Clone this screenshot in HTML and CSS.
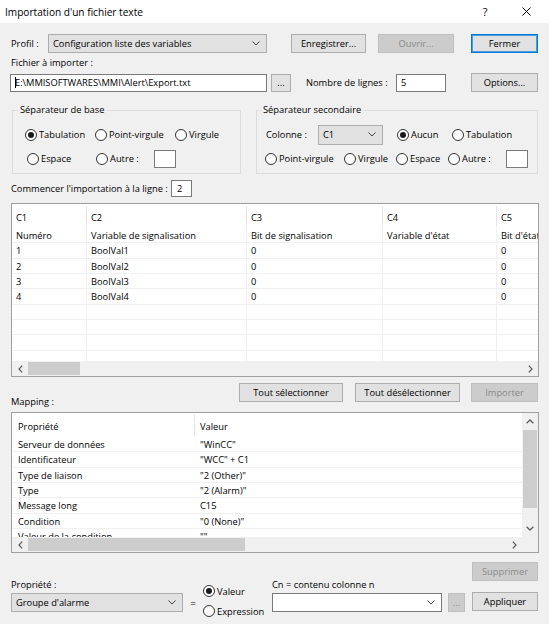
FILE: index.html
```html
<!DOCTYPE html>
<html lang="fr">
<head>
<meta charset="utf-8">
<title>Importation d'un fichier texte</title>
<link rel="stylesheet" href="styles.css">
</head>
<body>
<div class="titlebar">
  <span class="title">Importation d'un fichier texte</span>
  <span class="help">?</span>
  <span class="close"><svg width="9" height="9" viewBox="0 0 9 9"><path d="M0.5 0.5L8.5 8.5M8.5 0.5L0.5 8.5" stroke="#000" stroke-width="1" fill="none"/></svg></span>
</div>
<div class="main">
  <div class="row r1">
    <span class="lbl lbl-profil">Profil :</span>
    <div class="combo combo-profile"><span>Configuration liste des variables</span><svg class="chev" width="8" height="5" viewBox="0 0 8 5"><path d="M0.5 0.5L4 4L7.5 0.5" stroke="#444" stroke-width="1" fill="none"/></svg></div>
    <div class="btn btn-save">Enregistrer...</div>
    <div class="btn btn-open disabled">Ouvrir...</div>
    <div class="btn btn-close default">Fermer</div>
  </div>
  <div class="file-label">Fichier à importer :</div>
  <div class="row r3">
    <div class="input input-file"><span class="caret"></span><span class="path">E:\MMISOFTWARES\MMI\Alert\Export.txt</span></div>
    <div class="btn btn-browse">...</div>
    <span class="lbl lbl-lines">Nombre de lignes :</span>
    <div class="input input-lines">5</div>
    <div class="btn btn-options">Options...</div>
  </div>
  <div class="groups">
    <fieldset class="group group1">
      <legend>Séparateur de base</legend>
      <div class="grow g1r1">
        <label class="radio checked w70"><span class="dot"></span>Tabulation</label>
        <label class="radio w80"><span class="dot"></span>Point-virgule</label>
        <label class="radio"><span class="dot"></span>Virgule</label>
      </div>
      <div class="grow g1r2">
        <label class="radio w69"><span class="dot"></span>Espace</label>
        <label class="radio w58"><span class="dot"></span>Autre :</label>
        <div class="input input-sep"></div>
      </div>
    </fieldset>
    <fieldset class="group group2">
      <legend>Séparateur secondaire</legend>
      <div class="grow g2r1">
        <span class="lbl lbl-col">Colonne :</span>
        <div class="combo combo-col"><span>C1</span><svg class="chev" width="8" height="5" viewBox="0 0 8 5"><path d="M0.5 0.5L4 4L7.5 0.5" stroke="#444" stroke-width="1" fill="none"/></svg></div>
        <label class="radio checked w55 aucun"><span class="dot"></span>Aucun</label>
        <label class="radio"><span class="dot"></span>Tabulation</label>
      </div>
      <div class="grow g2r2">
        <label class="radio w79"><span class="dot"></span>Point-virgule</label>
        <label class="radio w52"><span class="dot"></span>Virgule</label>
        <label class="radio w52"><span class="dot"></span>Espace</label>
        <label class="radio w58"><span class="dot"></span>Autre :</label>
        <div class="input input-sep"></div>
      </div>
    </fieldset>
  </div>
  <div class="row start-row">
    <span class="lbl lbl-start">Commencer l'importation à la ligne :</span>
    <div class="input input-start">2</div>
  </div>

  <div class="dgrid">
    <div class="dcontent">
      <div class="dhead">
        <div class="hc c1">C1</div><div class="hc c2">C2</div><div class="hc c3">C3</div><div class="hc c4">C4</div><div class="hc c5">C5</div>
      </div>
      <div class="drow"><div class="dc c1">Numéro</div><div class="dc c2">Variable de signalisation</div><div class="dc c3">Bit de signalisation</div><div class="dc c4">Variable d'état</div><div class="dc c5">Bit d'état</div></div>
      <div class="drow"><div class="dc c1">1</div><div class="dc c2">BoolVal1</div><div class="dc c3">0</div><div class="dc c4"></div><div class="dc c5">0</div></div>
      <div class="drow"><div class="dc c1">2</div><div class="dc c2">BoolVal2</div><div class="dc c3">0</div><div class="dc c4"></div><div class="dc c5">0</div></div>
      <div class="drow"><div class="dc c1">3</div><div class="dc c2">BoolVal3</div><div class="dc c3">0</div><div class="dc c4"></div><div class="dc c5">0</div></div>
      <div class="drow"><div class="dc c1">4</div><div class="dc c2">BoolVal4</div><div class="dc c3">0</div><div class="dc c4"></div><div class="dc c5">0</div></div>
      <div class="drow"><div class="dc c1"></div><div class="dc c2"></div><div class="dc c3"></div><div class="dc c4"></div><div class="dc c5"></div></div>
      <div class="drow"><div class="dc c1"></div><div class="dc c2"></div><div class="dc c3"></div><div class="dc c4"></div><div class="dc c5"></div></div>
      <div class="drow"><div class="dc c1"></div><div class="dc c2"></div><div class="dc c3"></div><div class="dc c4"></div><div class="dc c5"></div></div>
      <div class="drow"><div class="dc c1"></div><div class="dc c2"></div><div class="dc c3"></div><div class="dc c4"></div><div class="dc c5"></div></div>
    </div>
    <div class="hscroll">
      <span class="sarrow"><svg width="5" height="8" viewBox="0 0 5 8"><path d="M4.2 0.6L1 4L4.2 7.4" stroke="#606060" stroke-width="1.3" fill="none"/></svg></span>
      <span class="hthumb dthumb"></span>
      <span class="sfill"></span>
      <span class="sarrow"><svg width="5" height="8" viewBox="0 0 5 8"><path d="M0.8 0.6L4 4L0.8 7.4" stroke="#606060" stroke-width="1.3" fill="none"/></svg></span>
    </div>
  </div>

  <div class="row actions">
    <span class="lbl lbl-mapping">Mapping :</span>
    <div class="btn btn-selall">Tout sélectionner</div>
    <div class="btn btn-unsel">Tout désélectionner</div>
    <div class="btn btn-import disabled">Importer</div>
  </div>

  <div class="mgrid">
    <div class="mcontent">
      <div class="mhead"><div class="mh m1">Propriété</div><div class="mh m2">Valeur</div></div>
      <div class="mrow"><div class="mc m1">Serveur de données</div><div class="mc m2">"WinCC"</div></div>
      <div class="mrow"><div class="mc m1">Identificateur</div><div class="mc m2">"WCC" + C1</div></div>
      <div class="mrow"><div class="mc m1">Type de liaison</div><div class="mc m2">"2 (Other)"</div></div>
      <div class="mrow"><div class="mc m1">Type</div><div class="mc m2">"2 (Alarm)"</div></div>
      <div class="mrow"><div class="mc m1">Message long</div><div class="mc m2">C15</div></div>
      <div class="mrow"><div class="mc m1">Condition</div><div class="mc m2">"0 (None)"</div></div>
      <div class="mrow"><div class="mc m1">Valeur de la condition</div><div class="mc m2">""</div></div>
    </div>
    <div class="vscroll">
      <span class="varrow"><svg width="8" height="5" viewBox="0 0 8 5"><path d="M0.6 4.2L4 1L7.4 4.2" stroke="#606060" stroke-width="1.3" fill="none"/></svg></span>
      <span class="vthumb"></span>
      <span class="sfill"></span>
      <span class="varrow"><svg width="8" height="5" viewBox="0 0 8 5"><path d="M0.6 0.8L4 4L7.4 0.8" stroke="#606060" stroke-width="1.3" fill="none"/></svg></span>
    </div>
    <div class="hscroll">
      <span class="sarrow"><svg width="5" height="8" viewBox="0 0 5 8"><path d="M4.2 0.6L1 4L4.2 7.4" stroke="#606060" stroke-width="1.3" fill="none"/></svg></span>
      <span class="hthumb mthumb"></span>
      <span class="sfill"></span>
      <span class="sarrow"><svg width="5" height="8" viewBox="0 0 5 8"><path d="M0.8 0.6L4 4L0.8 7.4" stroke="#606060" stroke-width="1.3" fill="none"/></svg></span>
    </div>
    <div class="corner"></div>
  </div>

  <div class="bottom">
    <div class="colA">
      <div class="lbl blabel">Propriété :</div>
      <div class="combo combo-group"><span>Groupe d'alarme</span><svg class="chev" width="8" height="5" viewBox="0 0 8 5"><path d="M0.5 0.5L4 4L7.5 0.5" stroke="#444" stroke-width="1" fill="none"/></svg></div>
    </div>
    <div class="eq">=</div>
    <div class="colR">
      <label class="radio checked small"><span class="dot"></span>Valeur</label>
      <label class="radio small"><span class="dot"></span>Expression</label>
    </div>
    <div class="colC">
      <div class="lbl clabel">Cn = contenu colonne n</div>
      <div class="cline">
        <div class="combo combo-expr"><span></span><svg class="chev" width="8" height="5" viewBox="0 0 8 5"><path d="M0.5 0.5L4 4L7.5 0.5" stroke="#444" stroke-width="1" fill="none"/></svg></div>
        <div class="btn btn-dots disabled">...</div>
      </div>
    </div>
    <div class="colD">
      <div class="btn btn-del disabled">Supprimer</div>
      <div class="btn btn-apply">Appliquer</div>
    </div>
  </div>
</div>
</body>
</html>
```
FILE: styles.css
```css
* { box-sizing: border-box; }
html, body { margin: 0; padding: 0; }
body {
  width: 549px;
  height: 624px;
  overflow: hidden;
  background: #f0f0f0;
  font-family: "Open Sans", "Noto Sans", sans-serif;
  font-size: 9.3px;
  color: #000;
}

/* title bar */
.titlebar {
  height: 23px;
  background: #fff;
  display: flex;
  align-items: center;
  padding-left: 5px;
}
.title { font-size: 10.1px; }
.help { margin-left: auto; width: 12px; text-align: center; font-size: 11px; }
.close { margin-left: 31px; margin-right: 18px; display: flex; }

.main { padding: 0 10px 0 11px; }
.row { display: flex; align-items: center; height: 19px; }
.lbl { white-space: nowrap; }

/* controls */
.combo {
  height: 19px;
  background: #e1e1e1;
  border: 1px solid #adadad;
  display: flex;
  align-items: center;
  justify-content: space-between;
  padding: 0 6px 0 4px;
  white-space: nowrap;
}
.chev { flex: none; }
.btn {
  height: 19px;
  background: #e1e1e1;
  border: 1px solid #adadad;
  display: flex;
  align-items: center;
  justify-content: center;
  white-space: nowrap;
}
.btn.disabled { background: #cccccc; border-color: #bfbfbf; color: #8a8a8a; }
.btn.default { border-color: #0078d7; box-shadow: inset 0 0 0 1px #4a9be0; }
.input {
  height: 18px;
  background: #fff;
  border: 1px solid #7a7a7a;
  display: flex;
  align-items: center;
  padding-left: 4px;
  white-space: nowrap;
  overflow: hidden;
}

/* row 1 */
.r1 { margin-top: 11px; margin-right: 1px; }
.lbl-profil { width: 37px; }
.combo-profile { width: 219px; }
.btn-save { width: 75px; margin-left: 24px; }
.btn-open { width: 76px; margin-left: 12px; }
.btn-close { width: 67px; margin-left: auto; }

.file-label { margin-top: 3px; height: 14px; line-height: 14px; }

/* row 3 */
.r3 { margin-top: 3px; margin-right: 1px; }
.input-file { width: 257px; margin-left: -1px; padding-left: 4px; }
.caret { width: 1px; height: 11px; background: #000; flex: none; margin-right: -1px; }
.btn-browse { width: 20px; height: 18px; margin-left: 4px; }
.lbl-lines { width: 90px; margin-left: 15px; }
.input-lines { width: 50px; }
.btn-options { width: 67px; margin-left: auto; }

/* group boxes */
.groups { display: flex; margin-top: 11px; }
.group {
  margin: 0;
  padding: 0 0 5px 0;
  border: 1px solid #dcdcdc;
  min-width: 0;
}
.group legend { padding: 0 2px; line-height: 14px; }
.group1 { width: 229px; margin-left: 1px; }
.group1 legend { margin-left: 5px; }
.group2 { width: 282px; margin-left: 15px; }
.group2 legend { margin-left: 4px; }
.grow { display: flex; align-items: center; height: 19px; }
.g1r1, .g2r1 { margin-top: 8px; }
.g1r2, .g2r2 { margin-top: 5px; }
.g1r1 { padding-left: 12px; }
.g1r2 { padding-left: 14px; }
.g2r1 { padding-left: 9px; }
.g2r2 { padding-left: 8px; }

.radio { display: flex; align-items: center; height: 19px; white-space: nowrap; }
.radio .dot {
  width: 12px; height: 12px;
  border: 1px solid #333;
  border-radius: 50%;
  background: #fff;
  margin-right: 2px;
  display: flex; align-items: center; justify-content: center;
  flex: none;
}
.radio.checked .dot::after {
  content: "";
  width: 6px; height: 6px;
  border-radius: 50%;
  background: #1a1a1a;
}
.w52 { width: 52px; } .w55 { width: 55px; } .w58 { width: 58px; }
.w69 { width: 69px; } .w70 { width: 70px; } .w79 { width: 79px; } .w80 { width: 80px; }
.input-sep { width: 22px; }
.lbl-col { width: 52px; }
.combo-col { width: 65px; height: 20px; }
.aucun { margin-left: 14px; }

/* start row */
.start-row { margin-top: 5px; }
.lbl-start { width: 160px; }
.input-start { width: 21px; height: 17px; padding-left: 5px; }

/* data grid */
.dgrid {
  margin-top: 5px;
  height: 174px;
  border: 1px solid #a0a0a0;
  background: #fff;
  display: grid;
  grid-template-rows: 1fr 15px;
}
.dcontent { overflow: hidden; }
.dhead { display: flex; height: 24px; padding-top: 2px; }
.hc { height: 21px; line-height: 23px; border-right: 1px solid #e5e5e5; padding-left: 4px; white-space: nowrap; flex: none; }
.drow { display: flex; height: 15.35px; border-bottom: 1px solid #f0f0f0; }
.dc { border-right: 1px solid #f0f0f0; line-height: 15px; padding-left: 4px; white-space: nowrap; overflow: hidden; flex: none; }
.c1 { width: 75px; }
.c2 { width: 160px; }
.c3 { width: 136px; }
.c4 { width: 114px; }
.c5 { width: 100px; }

.hscroll { background: #f0f0f0; display: flex; align-items: center; }
.sarrow { width: 16px; height: 15px; display: flex; align-items: center; justify-content: center; flex: none; }
.hthumb { height: 13px; background: #cdcdcd; flex: none; }
.dthumb { width: 52px; }
.mthumb { width: 217px; }
.sfill { flex: 1; }

/* actions */
.actions { height: 25px; align-items: flex-start; margin-top: 6px; margin-right: 1px; }
.lbl-mapping { margin-top: 12px; line-height: 14px; }
.btn-selall { width: 104px; margin-left: auto; }
.btn-unsel { width: 105px; margin-left: 12px; }
.btn-import { width: 67px; margin-left: 11px; }

/* mapping grid */
.mgrid {
  margin-top: 4px;
  height: 141px;
  border: 1px solid #a0a0a0;
  background: #fff;
  display: grid;
  grid-template-columns: 1fr 16px;
  grid-template-rows: 1fr 15px;
}
.mcontent { overflow: hidden; }
.mhead { display: flex; height: 24px; padding-top: 2px; }
.mh { height: 21px; line-height: 23px; white-space: nowrap; }
.mh.m1 { border-right: 1px solid #e5e5e5; }
.mrow { display: flex; height: 15.35px; border-bottom: 1px solid #f0f0f0; }
.mc { line-height: 15px; white-space: nowrap; }
.m1 { width: 183px; padding-left: 6px; flex: none; }
.m2 { padding-left: 5px; flex: 1; }
.vscroll { background: #f0f0f0; display: flex; flex-direction: column; align-items: center; }
.varrow { height: 17px; width: 16px; display: flex; align-items: center; justify-content: center; flex: none; }
.vthumb { width: 14px; height: 78px; background: #cdcdcd; flex: none; }
.corner { background: #f0f0f0; }

/* bottom */
.bottom { display: flex; align-items: flex-start; margin-top: 9px; margin-right: 1px; }
.colA { width: 172px; margin-top: 16px; }
.blabel { line-height: 14px; }
.combo-group { margin-top: 1px; width: 172px; }
.eq { width: 20px; text-align: center; margin-top: 34px; line-height: 14px; font-size: 10px; }
.colR { width: 69px; margin-top: 21px; }
.radio.small { height: 16px; }
.radio.small + .radio.small { margin-top: 4px; }
.colC { width: 193px; margin-top: 16px; }
.clabel { line-height: 14px; }
.cline { display: flex; margin-top: 1px; }
.combo-expr { width: 170px; background: #fff; border-color: #7a7a7a; }
.btn-dots { width: 17px; margin-left: 6px; }
.colD { margin-left: auto; width: 66px; }
.btn-apply { margin-top: 11px; }
```
